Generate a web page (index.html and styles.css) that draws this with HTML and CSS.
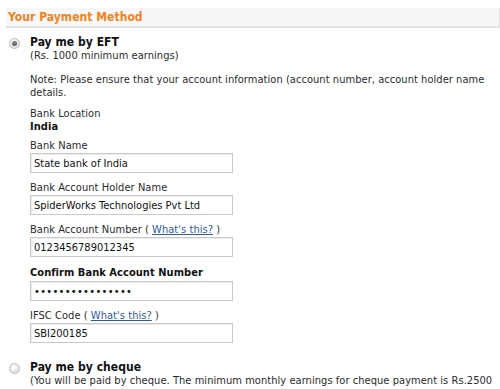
FILE: index.html
```html
<!DOCTYPE html>
<html lang="en">
<head>
  <meta charset="UTF-8" />
  <title>Your Payment Method</title>
  <link rel="stylesheet" href="styles.css">
</head>
<body>

  <div class="payment">
    <h2 class="section-head">Your Payment Method</h2>

    <!-- EFT option -->
    <div class="option">
      <span class="radio checked"></span>
      <div class="option-body">
        <div class="option-title">Pay me by EFT</div>
        <div>(Rs. 1000 minimum earnings)</div>

        <p class="note">Note: Please ensure that your account information (account number, account holder name details.</p>

        <div class="location">
          <div>Bank Location</div>
          <div class="strong">India</div>
        </div>

        <div class="field">
          <label>Bank Name</label>
          <input type="text" value="State bank of India" />
        </div>
        <div class="field">
          <label>Bank Account Holder Name</label>
          <input type="text" value="SpiderWorks Technologies Pvt Ltd" />
        </div>
        <div class="field">
          <label>Bank Account Number ( <a href="#">What's this?</a> )</label>
          <input type="text" value="0123456789012345" />
        </div>
        <div class="field confirm">
          <label class="strong">Confirm Bank Account Number</label>
          <input type="password" value="0123456789012345" />
        </div>
        <div class="field">
          <label>IFSC Code ( <a href="#">What's this?</a> )</label>
          <input type="text" value="SBI200185" />
        </div>
      </div>
    </div>

    <!-- Cheque option -->
    <div class="option cheque">
      <span class="radio"></span>
      <div class="option-body">
        <div class="option-title">Pay me by cheque</div>
        <div class="nowrap">(You will be paid by cheque. The minimum monthly earnings for cheque payment is Rs.2500</div>
      </div>
    </div>
  </div>

</body>
</html>
```

FILE: styles.css
```css
body {
  margin: 0;
  font-family: Tahoma, "DejaVu Sans Condensed", "DejaVu Sans", sans-serif;
  font-size: 11px;
  line-height: 13px;
  letter-spacing: 0.05px;
  color: #2b2b2b;
  background: #fff;
  overflow: hidden;
}

.payment {
  padding-top: 8px;
}

.section-head {
  margin: 0 0 0 6px;
  padding: 2px 0 0 2px;
  height: 16px;
  background: #f7f7f7;
  border-bottom: 2px solid #e2e2e2;
  border-right: 1px solid #e2e2e2;
  color: #f08321;
  font-size: 12px;
  line-height: 15px;
  font-weight: bold;
}

.option {
  display: flex;
  padding-left: 9px;
  margin-top: 8px;
}

.option.cheque {
  margin-top: 18px;
}

.radio {
  flex: none;
  width: 11px;
  height: 11px;
  margin-top: 2px;
  margin-right: 10px;
  border-radius: 50%;
  border: 1px solid #bcbcbc;
  box-sizing: border-box;
  background: radial-gradient(circle at 40% 35%, #ffffff, #d4d4d4);
  position: relative;
}

.radio.checked::after {
  content: "";
  position: absolute;
  left: 2px;
  top: 2px;
  width: 5px;
  height: 5px;
  border-radius: 50%;
  background: radial-gradient(circle at 40% 35%, #8a8a8a, #4a4a4a);
}

.option-body {
  flex: 1;
  min-width: 0;
}

.option-title,
.strong {
  font-weight: bold;
  color: #111;
}

.option-title {
  font-size: 12px;
}

.note {
  margin: 11px 0 0;
  padding-right: 2px;
}

.location {
  margin-top: 8px;
}

.field {
  display: flex;
  flex-direction: column;
  align-items: flex-start;
  margin-top: 6px;
}

.field + .field {
  margin-top: 8px;
}

.field.confirm {
  margin-top: 9px;
}

.field input {
  margin-top: 1px;
  width: 203px;
  height: 20px;
  box-sizing: border-box;
  padding: 0 3px;
  border: 1px solid #c9c9c9;
  box-shadow: inset 1px 1px 0 #ececec;
  font-family: inherit;
  font-size: 11px;
  color: #111;
  outline: none;
}

.field.confirm input {
  margin-top: 2px;
}

.field input[type="password"] {
  font-size: 11px;
  letter-spacing: 0.3px;
}

a {
  color: #2b5aa8;
  text-decoration: underline;
}

.nowrap {
  white-space: nowrap;
}
```
